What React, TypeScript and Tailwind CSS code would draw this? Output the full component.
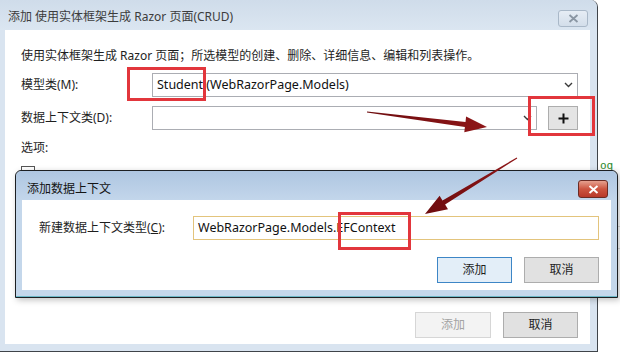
import React from "react";

const Chevron = () => (
  <svg width="9" height="6" viewBox="0 0 9 6" className="shrink-0">
    <path d="M1 1 L4.5 4.5 L8 1" fill="none" stroke="#3a3a3a" strokeWidth="1.4" />
  </svg>
);

export default function App() {
  return (
    <div className="relative w-[620px] h-[355px] bg-white overflow-hidden font-['Noto_Sans','Noto_Sans_CJK_SC',sans-serif] text-[12px] text-[#1e1e1e]">
      {/* stray background text on the right */}
      <div className="absolute left-[600px] top-[159px] text-[11px] leading-[14px] text-[#2d8a2d] font-['DejaVu_Sans_Mono',monospace]">oq</div>
      <div className="absolute left-[598px] top-[226px] w-[22px] h-px bg-[#dcdcdc]" />
      <div className="absolute left-[598px] top-[248px] w-[22px] h-px bg-[#dcdcdc]" />

      {/* outer window */}
      <div className="absolute left-0 top-0 w-[598px] h-[352px] flex flex-col bg-[#d9e4f0] border-r border-b border-[#3f4449] rounded-tr-[7px]">
        <div className="h-[30px] shrink-0 flex items-start justify-between pl-[8px] pr-[9px] bg-gradient-to-b from-[#cfdcea] to-[#dbe6f1] rounded-tr-[7px]">
          <span className="mt-[9px] leading-[16px] text-[#3c3c3c]">添加 使用实体框架生成 Razor 页面(CRUD)</span>
          <div className="mt-[10px] w-[30px] h-[17px] rounded-[3px] border border-[#a9b8c8] bg-gradient-to-b from-[#e6edf5] to-[#d3deea] flex items-center justify-center">
            <svg width="11" height="9" viewBox="0 0 11 9">
              <path d="M1.5 1 L9.5 8 M9.5 1 L1.5 8" stroke="#8a96a3" strokeWidth="1.8" />
            </svg>
          </div>
        </div>
        <div className="flex-1 ml-[5px] mr-[7px] mb-[7px] bg-white flex flex-col pl-[16px] pr-[12px] pt-[18px] pb-[6px]">
          <div className="leading-[16px]">使用实体框架生成 Razor 页面；所选模型的创建、删除、详细信息、编辑和列表操作。</div>
          <div className="mt-[9px] flex items-center h-[24px]">
            <div className="w-[131px] leading-[16px]">模型类(M):</div>
            <div className="flex-1 h-[24px] border border-[#abadb3] flex items-center justify-between pl-[4px] pr-[4px]">
              <span className="text-[12.5px] text-[#111]">Student (WebRazorPage.Models)</span>
              <Chevron />
            </div>
          </div>
          <div className="mt-[9px] flex items-center h-[24px]">
            <div className="w-[131px] leading-[16px]">数据上下文类(D):</div>
            <div className="w-[385px] h-[24px] border border-[#abadb3] flex items-center justify-end pr-[4px]">
              <Chevron />
            </div>
            <div className="ml-[11px] w-[30px] h-[24px] border border-[#adadad] bg-[#e4e4e4] flex items-center justify-center">
              <svg width="11" height="11" viewBox="0 0 11 11">
                <path d="M5.5 0.5 V10.5 M0.5 5.5 H10.5" stroke="#111" strokeWidth="2" />
              </svg>
            </div>
          </div>
          <div className="mt-[10px] leading-[16px]">选项:</div>
          <div className="mt-[10px] w-[14px] h-[14px] border border-[#555]" />
          <div className="mt-auto flex justify-end gap-[12px]">
            <div className="w-[76px] h-[26px] border border-[#d6d6d6] bg-[#f3f3f3] text-[#a3a3a3] flex items-center justify-center">添加</div>
            <div className="w-[75px] h-[26px] border border-[#adadad] bg-[#e1e1e1] flex items-center justify-center">取消</div>
          </div>
        </div>
      </div>

      {/* inner dialog */}
      <div className="absolute left-[15px] top-[170px] w-[603px] h-[128px] border border-[#1c1f22] bg-[#c4d7eb] flex flex-col rounded-t-[6px] shadow-[2px_2px_6px_rgba(0,0,0,0.25)]">
        <div className="h-[29px] shrink-0 flex items-start justify-between pl-[11px] pr-[9px] bg-gradient-to-b from-[#aec6e1] to-[#c3d6eb] rounded-t-[6px]">
          <span className="mt-[10px] leading-[16px] text-[#141414]">添加数据上下文</span>
          <div className="mt-[9px] w-[30px] h-[18px] rounded-[3px] border border-[#6b2b24] bg-gradient-to-b from-[#e5a08f] via-[#cc5440] to-[#b8392a] flex items-center justify-center">
            <svg width="11" height="9" viewBox="0 0 11 9">
              <path d="M1.5 1 L9.5 8 M9.5 1 L1.5 8" stroke="#ffffff" strokeWidth="2" />
            </svg>
          </div>
        </div>
        <div className="flex-1 mx-[6px] bg-white flex flex-col pl-[17px] pr-[12px] pt-[16px]">
          <div className="flex items-center h-[24px]">
            <div className="w-[154px] leading-[16px]">
              新建数据上下文类型(<span className="underline">C</span>):
            </div>
            <div className="flex-1 h-[24px] border border-[#e3c47c] flex items-center pl-[4px]">
              <span className="text-[12.5px] text-[#111]">WebRazorPage.Models.EFContext</span>
            </div>
          </div>
          <div className="mt-[17px] flex justify-end gap-[12px]">
            <div className="w-[75px] h-[26px] border border-[#3d86c6] bg-[#e3eef8] flex items-center justify-center">添加</div>
            <div className="w-[75px] h-[26px] border border-[#adadad] bg-[#e1e1e1] flex items-center justify-center">取消</div>
          </div>
        </div>
        <div className="h-[7px] shrink-0 border-b border-[#6bb7c6]" />
      </div>

      {/* annotations */}
      <svg className="absolute left-0 top-0 pointer-events-none" width="620" height="355" viewBox="0 0 620 355">
        <defs>
          <linearGradient id="ar1" x1="0" y1="0" x2="1" y2="0">
            <stop offset="0" stopColor="#6e0c0e" />
            <stop offset="1" stopColor="#8e1618" />
          </linearGradient>
        </defs>
        <rect x="128.5" y="68.5" width="76" height="31" fill="none" stroke="#e2363c" strokeWidth="3" />
        <rect x="529.5" y="97.5" width="64" height="37" fill="none" stroke="#e2363c" strokeWidth="3" />
        <rect x="339.5" y="213.5" width="70" height="35" fill="none" stroke="#e2363c" strokeWidth="3" />
        <polygon
          points="367.06,111.5 465.5,121.9 466.1,116.5 487,127 464.3,132.3 464.9,126.9 366.94,112.5"
          fill="url(#ar1)"
        />
        <polygon
          points="517.26,158.43 445.1,204.6 448,209.3 425,214 439.6,195.7 442.5,200.4 516.74,157.57"
          fill="url(#ar1)"
        />
      </svg>
    </div>
  );
}
